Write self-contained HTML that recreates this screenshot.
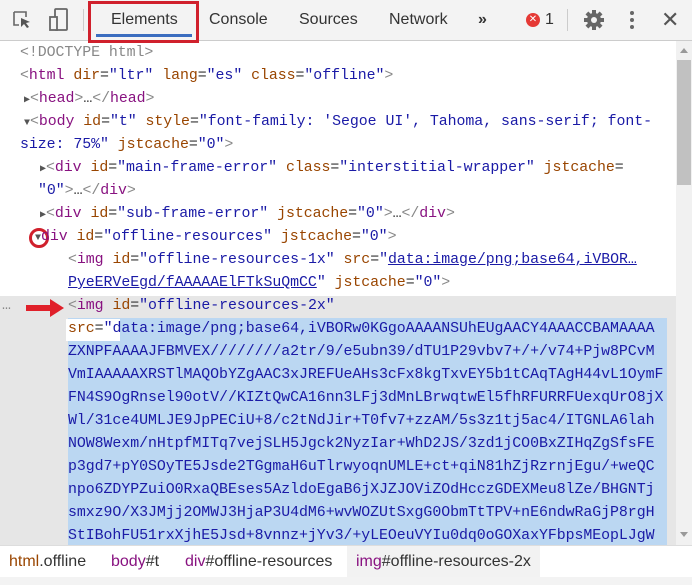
<!DOCTYPE html>
<html><head><style>
body{margin:0;width:692px;height:585px;overflow:hidden;background:#fff;font-family:"Liberation Sans",sans-serif;position:relative}
.tb{position:absolute;left:0;top:0;width:692px;height:40px;background:#f3f3f3;border-bottom:1px solid #ccc}
.tab{position:absolute;top:11px;font-size:16px;color:#333}
.code{position:absolute;left:0;top:41px;width:676px;font-family:"Liberation Mono",monospace;font-size:14.9px;color:#333;letter-spacing:-0.05px}
.l{position:absolute;height:23px;line-height:23px;white-space:pre}
.t{color:#881280}.a{color:#994500}.v{color:#1a1aa6}.g{color:#888}
.sel{position:absolute;left:0;top:255px;width:676px;height:250px;background:#e6e6e6}
.blue{position:absolute;left:68px;top:277px;width:599px;height:230px;background:#bbd7f2}
.tri{color:#555;font-size:10px}
</style></head><body>
<div class="tb">
<svg style="position:absolute;left:12px;top:10px" width="20" height="20" viewBox="0 0 20 20"><path d="M2 2h12v5M2 2v13h5" fill="none" stroke="#666" stroke-width="1.6"/><path d="M9 8l9 4-4 1 3 4-2 1-3-4-3 3z" fill="#555"/></svg>
<svg style="position:absolute;left:48px;top:8px" width="22" height="24" viewBox="0 0 22 24"><rect x="7" y="1" width="12" height="21" rx="1" fill="none" stroke="#666" stroke-width="1.8"/><rect x="2" y="9" width="7" height="13" fill="#f3f3f3" stroke="#666" stroke-width="1.8"/></svg>
<div style="position:absolute;left:83px;top:9px;width:1px;height:22px;background:#ccc"></div>
<div style="position:absolute;left:88px;top:1px;width:111px;height:42px;border:3px solid #d0202c;box-sizing:border-box"></div>
<div class="tab" style="left:111px">Elements</div>
<div style="position:absolute;left:96px;top:34px;width:96px;height:3px;background:#3b6dbf"></div>
<div class="tab" style="left:209px">Console</div>
<div class="tab" style="left:299px">Sources</div>
<div class="tab" style="left:389px">Network</div>
<div class="tab" style="left:478px;font-weight:bold">»</div>
<div style="position:absolute;left:526px;top:13px;width:14px;height:14px;border-radius:50%;background:#e53935;color:#fff;font-size:10px;line-height:14px;text-align:center">✕</div>
<div class="tab" style="left:545px">1</div>
<div style="position:absolute;left:567px;top:9px;width:1px;height:22px;background:#ccc"></div>
<svg style="position:absolute;left:583px;top:9px" width="22" height="22" viewBox="0 0 22 22"><g fill="#666"><circle cx="11" cy="11" r="7"/><rect x="9" y="1" width="4" height="20"/><rect x="1" y="9" width="20" height="4"/><rect x="9" y="1" width="4" height="20" transform="rotate(45 11 11)"/><rect x="9" y="1" width="4" height="20" transform="rotate(-45 11 11)"/></g><circle cx="11" cy="11" r="3" fill="#f3f3f3"/></svg>
<div style="position:absolute;left:630px;top:11px;width:4px;height:4px;background:#666;border-radius:50%;box-shadow:0 7px #666,0 14px #666"></div>
<div style="position:absolute;left:661px;top:7px;font-size:22px;color:#555">✕</div>
</div>
<div class="code">
<div class="sel"></div><div class="blue"></div>
<div class="l g" style="left:20px;top:1px">&lt;!DOCTYPE html&gt;</div>
<div class="l" style="left:20px;top:24px"><span class="g">&lt;</span><span class="t">html</span> <span class="a">dir</span>=<span class="v">"ltr"</span> <span class="a">lang</span>=<span class="v">"es"</span> <span class="a">class</span>=<span class="v">"offline"</span><span class="g">&gt;</span></div>
<div class="l" style="left:24px;top:47px"><span class="tri">▶</span><span class="g">&lt;</span><span class="t">head</span><span class="g">&gt;</span>…<span class="g">&lt;/</span><span class="t">head</span><span class="g">&gt;</span></div>
<div class="l" style="left:24px;top:70px"><span class="tri">▼</span><span class="g">&lt;</span><span class="t">body</span> <span class="a">id</span>=<span class="v">"t"</span> <span class="a">style</span>=<span class="v">"font-family: 'Segoe UI', Tahoma, sans-serif; font-</span></div>
<div class="l" style="left:20px;top:93px"><span class="v">size: 75%"</span> <span class="a">jstcache</span>=<span class="v">"0"</span><span class="g">&gt;</span></div>
<div class="l" style="left:40px;top:116px"><span class="tri">▶</span><span class="g">&lt;</span><span class="t">div</span> <span class="a">id</span>=<span class="v">"main-frame-error"</span> <span class="a">class</span>=<span class="v">"interstitial-wrapper"</span> <span class="a">jstcache</span>=</div>
<div class="l" style="left:38px;top:139px"><span class="v">"0"</span><span class="g">&gt;</span>…<span class="g">&lt;/</span><span class="t">div</span><span class="g">&gt;</span></div>
<div class="l" style="left:40px;top:162px"><span class="tri">▶</span><span class="g">&lt;</span><span class="t">div</span> <span class="a">id</span>=<span class="v">"sub-frame-error"</span> <span class="a">jstcache</span>=<span class="v">"0"</span><span class="g">&gt;</span>…<span class="g">&lt;/</span><span class="t">div</span><span class="g">&gt;</span></div>
<div style="position:absolute;left:29px;top:187px;width:20px;height:20px;border:3px solid #d0202c;border-radius:50%;box-sizing:border-box"></div>
<div class="l" style="left:35px;top:185px"><span class="tri">▼</span><span class="t">div</span> <span class="a">id</span>=<span class="v">"offline-resources"</span> <span class="a">jstcache</span>=<span class="v">"0"</span><span class="g">&gt;</span></div>
<div class="l" style="left:68px;top:208px"><span class="g">&lt;</span><span class="t">img</span> <span class="a">id</span>=<span class="v">"offline-resources-1x"</span> <span class="a">src</span>=<span class="v">"<u>data:image/png;base64,iVBOR…</u></span></div>
<div class="l" style="left:68px;top:231px"><span class="v"><u>PyeERVeEgd/fAAAAAElFTkSuQmCC</u>"</span> <span class="a">jstcache</span>=<span class="v">"0"</span><span class="g">&gt;</span></div>
<div class="l g" style="left:2px;top:254px">…</div>
<svg style="position:absolute;left:26px;top:258px" width="38" height="18" viewBox="0 0 38 18"><path d="M0 6h24V0l14 9-14 9v-6H0z" fill="#e0202a"/></svg>
<div class="l" style="left:68px;top:254px"><span class="g">&lt;</span><span class="t">img</span> <span class="a">id</span>=<span class="v">"offline-resources-2x"</span></div>
<div style="position:absolute;left:66px;top:278px;width:54px;height:22px;background:#fff"></div>
<div class="l" style="left:68px;top:277px"><span class="a">src</span>=<span class="v">"data:image/png;base64,iVBORw0KGgoAAAANSUhEUgAACY4AAACCBAMAAAA</span></div>
<div class="l v" style="left:68px;top:300px">ZXNPFAAAAJFBMVEX////////a2tr/9/e5ubn39/dTU1P29vbv7+/+/v74+Pjw8PCvM</div>
<div class="l v" style="left:68px;top:323px">VmIAAAAAXRSTlMAQObYZgAAC3xJREFUeAHs3cFx8kgTxvEY5b1tCAqTAgH44vL1OymF</div>
<div class="l v" style="left:68px;top:346px">FN4S9OgRnsel90otV//KIZtQwCA16nn3LFj3dMnLBrwqtwEl5fhRFURRFUexqUrO8jX</div>
<div class="l v" style="left:68px;top:369px">Wl/31ce4UMLJE9JpPECiU+8/c2tNdJir+T0fv7+zzAM/5s3z1tj5ac4/ITGNLA6lah</div>
<div class="l v" style="left:68px;top:392px">NOW8Wexm/nHtpfMITq7vejSLH5Jgck2NyzIar+WhD2JS/3zd1jCO0BxZIHqZgSfsFE</div>
<div class="l v" style="left:68px;top:415px">p3gd7+pY0SOyTE5Jsde2TGgmaH6uTlrwyoqnUMLE+ct+qiN81hZjRzrnjEgu/+weQC</div>
<div class="l v" style="left:68px;top:438px">npo6ZDYPZuiO0RxaQBEses5AzldoEgaB6jXJZJOViZOdHcczGDEXMeu8lZe/BHGNTj</div>
<div class="l v" style="left:68px;top:461px">smxz9O/X3JMjj2OMWJ3HjaP3U4dM6+wvWOZUtSxgG0ObmTtTPV+nE6ndwRaGjP8rgH</div>
<div class="l v" style="left:68px;top:484px">StIBohFU51rxXjhE5Jsd+8vnnz+jYv3/+yLEOeuVYIu0dq0oGOXaxYFbpsMEopLJgW</div>
</div>
<div style="position:absolute;left:676px;top:41px;width:16px;height:504px;background:#f1f1f1"></div>
<div style="position:absolute;left:677px;top:60px;width:14px;height:125px;background:#c1c1c1"></div>
<div style="position:absolute;left:680px;top:48px;width:0;height:0;border:4px solid transparent;border-bottom:5px solid #999;border-top:0"></div>
<div style="position:absolute;left:680px;top:532px;width:0;height:0;border:4px solid transparent;border-top:5px solid #999;border-bottom:0"></div>
<div style="position:absolute;left:0;top:545px;width:692px;height:31px;background:#fff;border-top:1px solid #ddd;border-bottom:1px solid #ccc;font-size:16px;line-height:31px">
<span style="position:absolute;left:9px;color:#994500">html<span style="color:#333">.offline</span></span>
<span style="position:absolute;left:111px;color:#881280">body<span style="color:#333">#t</span></span>
<span style="position:absolute;left:185px;color:#881280">div<span style="color:#333">#offline-resources</span></span>
<span style="position:absolute;left:348px;top:0;width:66px;height:31px;"></span>
<span style="position:absolute;left:347px;padding:0 9px;background:#f2f2f2;color:#881280">img<span style="color:#333">#offline-resources-2x</span></span>
</div>
<div style="position:absolute;left:0;top:577px;width:692px;height:8px;background:#f3f3f3"></div>
</body></html>
